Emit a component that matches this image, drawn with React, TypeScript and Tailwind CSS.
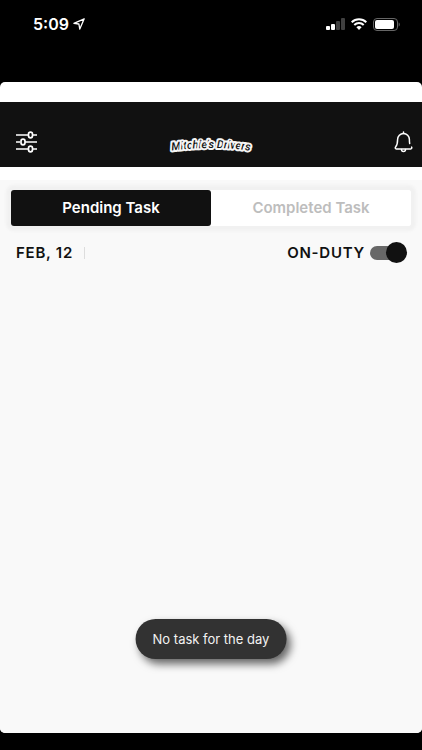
import { useState } from 'react';

type Tab = 'pending' | 'completed';

function StatusBar() {
  return (
    <div className="h-[82px] shrink-0 flex items-start justify-between pt-3 pl-[33px] pr-[22px] text-white">
      <div className="flex items-center gap-1">
        <span className="font-['Inter'] text-[16px] leading-6 font-semibold">5:09</span>
        <svg className="w-3 h-3" viewBox="0 0 12 12" fill="none" stroke="currentColor" strokeWidth="1.3" strokeLinejoin="round">
          <path d="M11.2.8.9 5.3l5 .7.9 5.1L11.2.8Z" />
        </svg>
      </div>

      <div className="flex items-center gap-[6px] h-6">
        <svg className="w-[19px] h-3" viewBox="0 0 19 12" fill="currentColor">
          <rect x="0" y="8" width="4" height="4" rx="1" />
          <rect x="5" y="6" width="4" height="6" rx="1" />
          <rect x="10" y="3" width="4" height="9" rx="1" opacity="0.25" />
          <rect x="15" y="0" width="4" height="12" rx="1" opacity="0.25" />
        </svg>
        <svg className="w-4 h-3" viewBox="0 0 16 12" fill="none" stroke="currentColor" strokeWidth="2">
          <path d="M.7 4.2a10.4 10.4 0 0 1 14.6 0" />
          <path d="M3.3 7a6.7 6.7 0 0 1 9.4 0" />
          <path d="M8 12 5.4 9.3a3.8 3.8 0 0 1 5.2 0L8 12Z" fill="currentColor" stroke="none" />
        </svg>
        <svg className="w-[27px] h-[13px]" viewBox="0 0 27 13" fill="none">
          <rect x="0.5" y="0.5" width="24" height="12" rx="3.5" stroke="#666666" />
          <rect x="2" y="2" width="19" height="9" rx="2" fill="currentColor" />
          <path d="M25.7 4.5c1.4.7 1.4 3.3 0 4v-4Z" fill="#666666" />
        </svg>
      </div>
    </div>
  );
}

function Logo() {
  return (
    <svg className="w-[84px] h-6" viewBox="0 0 84 24" role="img" aria-label="Mitchie's Drivers">
      <defs>
        <path id="logo-arc" d="M0 21Q42 15 84 21" />
      </defs>
      <text
        className="font-['Roboto',sans-serif] text-[11px] font-medium italic"
        fill="#111111"
        stroke="#f5f5f5"
        strokeWidth="4"
        strokeLinejoin="round"
        paintOrder="stroke"
        textAnchor="middle"
      >
        <textPath href="#logo-arc" startOffset="50%">Mitchie's Drivers</textPath>
      </text>
    </svg>
  );
}

function Header() {
  return (
    <header className="h-[65px] bg-[#111111] grid grid-cols-[1fr_auto_1fr] items-center pt-[15px] text-white">
      <button type="button" aria-label="Filters" className="justify-self-start pl-4">
        <svg className="w-[22px] h-[22px]" viewBox="0 0 22 22" fill="none" stroke="currentColor" strokeWidth="1.7">
          <path d="M0 4h12M17 4h4M0 11h4M9 11h12M0 18h12M17 18h4" />
          <rect x="12.5" y="1.2" width="4" height="5.6" rx="2" />
          <rect x="5" y="8.2" width="4" height="5.6" rx="2" />
          <rect x="12.5" y="15.2" width="4" height="5.6" rx="2" />
        </svg>
      </button>
      <Logo />
      <button type="button" aria-label="Notifications" className="justify-self-end pr-[9px]">
        <svg className="w-[19px] h-[22px]" viewBox="0 0 19 22" fill="none" stroke="currentColor" strokeWidth="1.5" strokeLinecap="round" strokeLinejoin="round">
          <path d="M9.5 1v1.5" />
          <path d="M15.7 12.5c-.3-1.2-.3-2.5-.3-4a5.9 5.9 0 0 0-11.8 0c0 4.4-.4 5.6-2 7.5-.7.9-.3 1.9.7 1.9h14.4c1 0 1.4-1 .9-1.8" />
          <path d="M7.5 18.5a2 2 0 0 0 4 0" />
        </svg>
      </button>
    </header>
  );
}

export default function App() {
  const [tab, setTab] = useState<Tab>('pending');
  const [onDuty, setOnDuty] = useState(true);

  const tabClass = (active: boolean) =>
    `flex-1 rounded-[3px] text-[15px] font-semibold ${active ? 'bg-[#111111] text-white' : 'bg-white text-[#bdbdbd]'}`;

  return (
    <div className="min-h-screen flex flex-col bg-black pb-[17px] font-['Inter',sans-serif]">
      <StatusBar />

      <div className="relative flex-1 flex flex-col rounded-[5px] overflow-hidden bg-white pt-5">
        <Header />

        <main className="flex-1 mt-[13px] bg-[#f9f9f9] px-[11px] pt-[10px]">
          <div role="tablist" className="flex h-9 rounded-[3px] bg-white shadow-[0_0_3px_5px_#f1f1f1]">
            <button type="button" role="tab" aria-selected={tab === 'pending'} onClick={() => setTab('pending')} className={tabClass(tab === 'pending')}>
              Pending Task
            </button>
            <button type="button" role="tab" aria-selected={tab === 'completed'} onClick={() => setTab('completed')} className={tabClass(tab === 'completed')}>
              Completed Task
            </button>
          </div>

          <div className="flex items-center justify-between mt-4 pl-[5px] pr-1 text-[15px] leading-5 font-semibold text-[#111111]">
            <div className="flex items-center gap-[11px]">
              <span className="tracking-wider">FEB, 12</span>
              <span className="w-px h-3 bg-[#dddddd]" />
            </div>
            <label className="flex items-center gap-1">
              <span className="tracking-wider">ON-DUTY</span>
              <span className="relative flex items-center w-[38px] h-[21px]">
                <input
                  type="checkbox"
                  role="switch"
                  checked={onDuty}
                  onChange={(e) => setOnDuty(e.target.checked)}
                  className="peer appearance-none w-[34px] h-[14px] ml-px rounded-full bg-[#b5b5b5] checked:bg-[#686868]"
                />
                <span className="pointer-events-none absolute left-0 top-0 size-[21px] rounded-full bg-[#111111] peer-checked:left-[17px]" />
              </span>
            </label>
          </div>
        </main>

        <div
          role="status"
          className="absolute bottom-[74px] left-1/2 -translate-x-1/2 whitespace-nowrap rounded-full bg-[#323232] px-[17px] py-[10px] text-[13px] leading-5 text-[#f2f2f2] shadow-[4px_5px_9px_rgba(0,0,0,0.6)]"
        >
          No task for the day
        </div>
      </div>
    </div>
  );
}
